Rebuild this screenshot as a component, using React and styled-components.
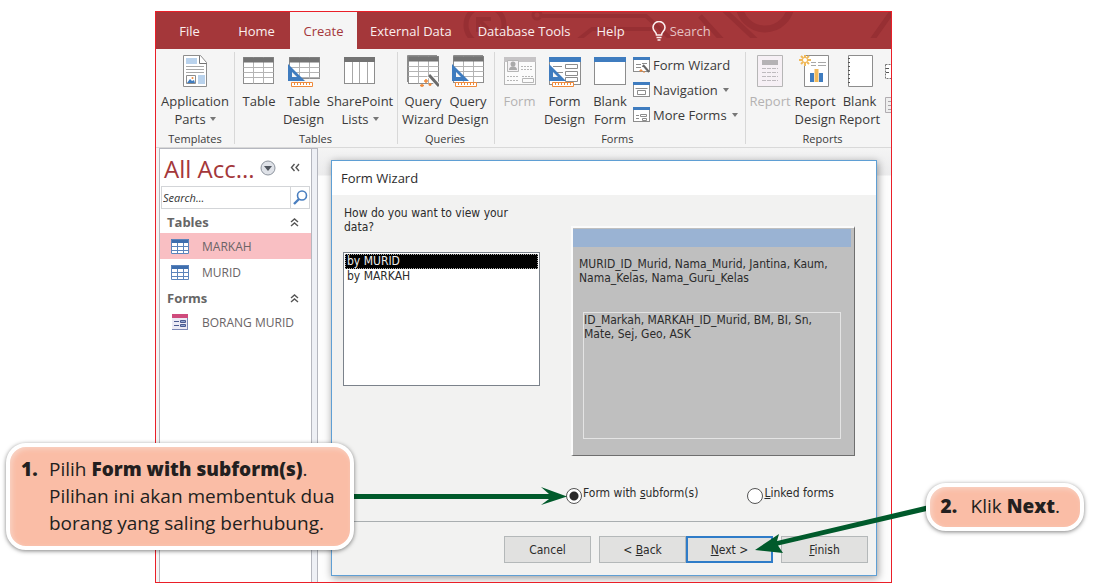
import React from "react";
import styled, { createGlobalStyle, css } from "styled-components";

const UI = '"Open Sans", "Noto Sans", sans-serif';
const DIALOG = '"DejaVu Sans Condensed", "DejaVu Sans", sans-serif';
const BLUE = "#3f7cbf";
const GREEN = "#005a2b";

const GlobalStyle = createGlobalStyle`
  *, *::before, *::after { box-sizing: border-box; }
  body { margin: 0; background: #fff; font-family: ${UI}; color: #3b3a3a; }
  button, input, select { font: inherit; color: inherit; }
  svg { display: block; flex: none; }
`;

const Figure = styled.main`
  position: relative;
  padding: 11px 209px 3px 155px;
`;

const AppWindow = styled.section`
  border: 1px solid #ea1f28;
  background: #f4f4f4;
  overflow: hidden;
`;

/* ---------- tab strip ---------- */

const TabStrip = styled.nav`
  position: relative;
  display: flex;
  height: 37px;
  background: #a4373a;
  overflow: hidden;
`;

const Circuit = styled.svg`
  position: absolute;
  top: 0;
  left: 300px;
`;

const Tab = styled.button`
  position: relative;
  flex: none;
  min-width: ${(p) => (p.$wide ? "67px" : "0")};
  padding: 0 13px;
  border: 0;
  background: ${(p) => (p.$active ? "#f5f5f5" : "transparent")};
  color: ${(p) => (p.$active ? "#a4373a" : "#fbeeee")};
  font-size: 13px;
  white-space: nowrap;
`;

const TellMe = styled.label`
  position: relative;
  display: flex;
  align-items: center;
  gap: 4px;
  padding-left: 14px;
  color: #fbeeee;
`;

const TellMeInput = styled.input`
  width: 90px;
  padding: 0;
  border: 0;
  outline: 0;
  background: transparent;
  font-size: 13px;
  &::placeholder { color: #e6c3c4; opacity: 1; }
`;

/* ---------- ribbon ---------- */

const Ribbon = styled.div`
  display: flex;
  border-bottom: 1px solid #d9d9d9;
  background: #f5f5f5;
  overflow: hidden;
`;

const Group = styled.section`
  flex: none;
  display: flex;
  flex-direction: column;
  padding: 0 ${(p) => p.$right || 0}px 1px ${(p) => p.$left || 0}px;
`;

const GroupBody = styled.div`
  display: flex;
  height: 79px;
`;

const GroupName = styled.h2`
  margin: 4px 0 0;
  font-size: 11px;
  font-weight: 400;
  line-height: 14px;
  text-align: center;
`;

const Separator = styled.div`
  flex: none;
  width: 1px;
  margin: 3px 0;
  background: #d8d8d8;
`;

const BigButton = styled.button`
  flex: none;
  display: flex;
  flex-direction: column;
  align-items: center;
  gap: 5px;
  width: ${(p) => p.$width}px;
  padding: 6px 0 0;
  border: 0;
  background: transparent;
  font-size: 13px;
  line-height: 18px;
  white-space: nowrap;
  color: ${(p) => (p.disabled ? "#b4b2b2" : "inherit")};
`;

const LabelLine = styled.span`
  display: flex;
  align-items: center;
  justify-content: center;
  gap: 4px;
`;

const SmallList = styled.div`
  display: flex;
  flex-direction: column;
  padding-top: 3px;
`;

const SmallButton = styled.button`
  display: flex;
  align-items: center;
  gap: 3px;
  height: 25px;
  padding: 0;
  border: 0;
  background: transparent;
  font-size: 13px;
  white-space: nowrap;
`;

const SmallText = styled.span`
  margin-right: 2px;
`;

/* ---------- navigation pane ---------- */

const Workspace = styled.div`
  display: flex;
  padding-left: 3px;
`;

const NavPane = styled.aside`
  flex: none;
  display: flex;
  flex-direction: column;
  width: 153px;
  border: 1px solid #b5b7bf;
  border-bottom: 0;
  background: #fff;
`;

const Shutter = styled.div`
  flex: none;
  width: 6px;
  border: 1px solid #b5b7bf;
  border-width: 1px 1px 0 0;
  background: #eef0f5;
`;

const NavHeader = styled.header`
  display: flex;
  align-items: center;
  height: 37px;
  padding: 0 11px 0 4px;
`;

const NavTitle = styled.h1`
  flex: 1;
  margin: 0;
  padding-top: 2px;
  color: #a4373a;
  font-size: 24px;
  line-height: 30px;
  font-weight: 400;
  white-space: nowrap;
`;

const IconButton = styled.button`
  display: flex;
  align-items: center;
  justify-content: center;
  padding: 0;
  border: 0;
  background: transparent;
  margin-left: ${(p) => p.$gap || 0}px;
`;

const SearchBox = styled.div`
  display: flex;
  height: 23px;
  margin: 0 1px;
  border: 1px solid #d3d5d8;
`;

const SearchInput = styled.input`
  flex: 1;
  min-width: 0;
  padding: 0 1px;
  border: 0;
  outline: 0;
  font-size: 11px;
  font-style: italic;
  &::placeholder { color: #333; opacity: 1; }
`;

const SearchButton = styled.button`
  display: flex;
  align-items: center;
  justify-content: center;
  width: 19px;
  padding: 0;
  border: 0;
  border-left: 1px solid #d3d5d8;
  background: #fff;
`;

const NavGroup = styled.button`
  display: flex;
  align-items: center;
  justify-content: space-between;
  height: 24px;
  padding: 2px 12px 0 7px;
  border: 0;
  background: transparent;
  color: #666;
  font-size: 13px;
  font-weight: 700;
`;

const NavItem = styled.a`
  display: flex;
  align-items: center;
  gap: 13px;
  height: 26px;
  padding-left: 11px;
  background: ${(p) => (p.$active ? "#f9bfc3" : "transparent")};
  color: #6a6466;
  font-size: 12px;
  text-decoration: none;
  white-space: nowrap;
`;

/* ---------- dialog ---------- */

const Canvas = styled.div`
  flex: 1;
  min-width: 0;
  padding: 12px 14px 6px 13px;
  background: linear-gradient(#f4f4f4, #ececed 27px, #fdfdfd 28px);
`;

const Dialog = styled.form`
  border: 1px solid #5f9fd4;
  background: #f2f2f1;
  box-shadow: 1px 2px 8px rgba(0, 0, 0, 0.4);
  font-family: ${DIALOG};
  font-size: 12px;
  line-height: 14px;
  color: #2b2b2b;
`;

const DialogTitle = styled.h2`
  margin: 0;
  padding: 0 9px;
  background: #fff;
  font-family: ${UI};
  font-size: 13px;
  font-weight: 400;
  line-height: 34px;
`;

const DialogBody = styled.div`
  display: flex;
  gap: 31px;
  padding: 11px 21px 0 11px;
`;

const Choice = styled.div`
  flex: none;
  width: 197px;
`;

const Question = styled.label`
  display: block;
  margin-bottom: 18px;
  padding-left: 1px;
`;

const ListBox = styled.select`
  display: block;
  width: 100%;
  height: 134px;
  padding: 1px;
  border: 1px solid #7b828b;
  border-radius: 0;
  outline: 0;
  background: #fff;
  overflow: hidden;
`;

const ListOption = styled.option`
  min-height: 15px;
  padding: 0 2px;
  line-height: 15px;
  color: #2b2b2b;
  &:checked {
    background: linear-gradient(#000, #000);
    color: #eee;
    outline: 1px dotted #aaa;
    outline-offset: -1px;
  }
`;

const Preview = styled.div`
  flex: 1;
  min-width: 0;
  height: 230px;
  margin-top: 20px;
  border-style: solid;
  border-width: 2px 1px 1px 2px;
  border-color: #fbfbfb #6f6f6f #6f6f6f #fbfbfb;
  background: #bfbfbf;
  display: flex;
  flex-direction: column;
`;

const PreviewBar = styled.div`
  height: 18px;
  margin: 1px 3px 0 0;
  background: #9ab3d3;
`;

const PreviewText = styled.p`
  margin: 10px 6px 0;
  min-height: 28px;
`;

const SubForm = styled.p`
  flex: 1;
  margin: 27px 13px 16px 10px;
  border: 1px solid #e4e4e4;
`;

const RadioRow = styled.div`
  display: flex;
  margin-top: 30px;
  padding-left: 234px;
`;

const RadioOption = styled.label`
  flex: none;
  display: flex;
  gap: 1px;
  margin-right: 49px;
  white-space: nowrap;
`;

const Radio = styled.input`
  appearance: none;
  flex: none;
  width: 16px;
  height: 16px;
  margin: 2px 0 0;
  border: 1px solid #555;
  border-radius: 50%;
  background: #fff;
  &:checked { background: radial-gradient(circle, #2b2b2b 4px, #fff 5px); }
`;

const Actions = styled.footer`
  display: flex;
  justify-content: flex-end;
  gap: 8px;
  margin-top: 17px;
  padding: 14px 8px 12px;
  border-top: 1px solid #a9aeb0;
`;

const Pair = styled.div`
  display: flex;
`;

const Push = styled.button`
  width: 87px;
  height: 27px;
  padding: 0;
  border: ${(p) => (p.$primary ? "2px solid #2f7cc8" : "1px solid #b4b8b9")};
  background: #e1e1e0;
  white-space: nowrap;
`;

/* ---------- annotations ---------- */

const calloutSide = {
  left: css`top: 443px; left: 6px; padding: 9px 16px 9px 11px;`,
  right: css`top: 483px; right: 17px; padding: 6px 20px 7px 11px;`,
};

const Callout = styled.aside`
  position: absolute;
  display: flex;
  border: 4px solid #fff;
  border-radius: 20px;
  background: #fabda6;
  box-shadow: 0 1px 4px rgba(0, 0, 0, 0.5), inset 2px 2px 5px #f8d3c5;
  color: #231f20;
  font-size: 19px;
  line-height: 27px;
  white-space: nowrap;
  ${(p) => calloutSide[p.$side]}
`;

const Strong = styled.b`
  font-weight: 800;
`;

const StepNumber = styled(Strong)`
  width: ${(p) => p.$width}px;
`;

const StepText = styled.p`
  margin: 0;
`;

const ArrowRight = styled.svg`
  position: absolute;
  top: 484px;
  left: 350px;
`;

const ArrowLeft = styled.svg`
  position: absolute;
  top: 500px;
  right: 170px;
`;

/* ---------- icons ---------- */

const Caret = () => (
  <svg width="6" height="4" viewBox="0 0 6 4"><path d="M0 0h6L3 4z" fill="#777" /></svg>
);

const Ruler = () => (
  <g>
    <path d="M0 9v17h17z" fill={BLUE} />
    <path d="M4 17v5h5z" fill="#f5f5f5" />
    <path d="M3.500 27.500h21v4h-21z" fill="#fff" stroke="#ee8a3c" />
    <path d="M6.500 28v2M9.500 28v2M12.500 28v2M15.500 28v2M18.500 28v2M21.500 28v2" stroke="#ee8a3c" />
  </g>
);

const Wand = () => (
  <g>
    <path d="M22 20l10 11" stroke="#fff" strokeWidth="5" />
    <path d="M22 20l10 11" stroke="#6b6b6b" strokeWidth="3" />
    <path d="M19 24v4M17 26h4M15 29v3M13 30.500h4M23 28v3M21.500 29.500h3" stroke="#ee8a3c" strokeWidth="1.500" />
  </g>
);

const Grid = ({ x = 0.5, y = 2.5, h = 26, head = "#737373" }) => (
  <g>
    <rect x={x} y={y} width="30" height={h} fill="#fff" stroke="#8d8d8d" />
    <path
      d={`M${x} ${y + 10}h30M${x} ${y + 15}h30M${x} ${y + 20}h30M${x + 10} ${y}v${h}M${x + 20} ${y}v${h}`}
      stroke="#b4b4b4"
      fill="none"
    />
    <rect x={x} y={y} width="30" height="5" fill={head} />
  </g>
);

const FormSheet = ({ head = BLUE, children }) => (
  <g>
    <rect x="0.5" y="2.500" width="31" height="27" fill="#fff" stroke="#8d8d8d" />
    <rect x="0" y="2" width="32" height="5" fill={head} />
    {children}
  </g>
);

const bigIcons = {
  parts: (
    <g fill="none">
      <path d="M4.500.5h17l6 7v24h-23z" fill="#fff" stroke="#8d8d8d" />
      <path d="M20.500 1v7.500h7" stroke="#737373" />
      <path d="M7 3h11v6H7zM19 20h7v9h-7z" fill="#b9d2ec" />
      <path d="M7 11.500h18M7 14.500h18M7 17.500h18" stroke="#a8a8a8" />
      <path d="M7.500 20.500h9v8h-9z" stroke="#8d8d8d" />
      <path d="M8 28l3-4 2 2 2-1 1 3z" fill={BLUE} />
      <circle cx="13.500" cy="23" r="1" fill="#ee8a3c" />
    </g>
  ),
  table: <Grid />,
  tableDesign: <g><Grid x={1.5} h={21} /><Ruler /></g>,
  lists: (
    <g>
      <rect x="0.5" y="2.500" width="30" height="26" fill="#fff" stroke="#8d8d8d" />
      <path d="M8.500 5v23M15.500 5v23M23.500 5v23" stroke="#a8a8a8" />
      <rect x="0" y="2" width="31" height="5" fill="#737373" />
    </g>
  ),
  queryWizard: <g><path d="M.5 27V.5H30" fill="none" stroke="#8d8d8d" /><Grid x={1.5} y={1.5} h={27} /><Wand /></g>,
  queryDesign: <g><path d="M1.500 27V.5H31" fill="none" stroke="#8d8d8d" /><Grid x={1.5} y={1.5} h={26} /><Ruler /></g>,
  form: (
    <g opacity="0.6">
      <FormSheet head="#a8a4a8">
        <path d="M3.500 5.500h11v11h-11z" fill="#f3eff3" stroke="#8d8d8d" />
        <circle cx="9" cy="9" r="2.500" fill="#777" />
        <path d="M5 15c0-5 8-5 8 0z" fill="#777" />
        <path d="M17 11.500h12M17 14.500h12M3 21.500h12M3 25.500h12M18 21.500h11" stroke="#8d8d8d" strokeDasharray="2 1" />
        <path d="M18.500 23.500h11v4h-11z" fill="none" stroke="#8d8d8d" />
      </FormSheet>
    </g>
  ),
  formDesign: (
    <g>
      <FormSheet>
        <path d="M16.500 9.500h12v4h-12zM16.500 16.500h12v4h-12zM16.500 22.500h12v4h-12zM4 11.500h9M8 17.500h6" fill="none" stroke="#8d8d8d" />
      </FormSheet>
      <Ruler />
    </g>
  ),
  blankForm: <FormSheet />,
  report: (
    <g opacity="0.6">
      <path d="M3.500.5h25v31h-25z" fill="#f8eef5" stroke="#8d8d8d" />
      <path d="M8 5h16v5H8z" fill="#8b878b" />
      <path d="M8 13.500h16M8 17.500h16M8 21.500h16M8 25.500h16" stroke="#9a949a" strokeDasharray="4 1" />
    </g>
  ),
  reportDesign: (
    <g>
      <path d="M5.500.5h24v31h-24z" fill="#fff" stroke="#8d8d8d" />
      <path d="M12 7.500h5M19 7.500h8M12 10.500h5M19 10.500h8" stroke="#a8a8a8" />
      <path d="M11 18h4v9h-4zM20 18h4v9h-4z" fill={BLUE} />
      <path d="M15.500 14h4v13h-4z" fill="#f0b95a" />
      <path d="M0 5h12M6-1v12M2 1l8 8M10 1L2 9" stroke="#f0b95a" strokeWidth="2" />
      <circle cx="6" cy="5" r="2" fill="#fff" />
    </g>
  ),
  blankReport: (
    <g>
      <path d="M4.500.5h24v31h-24z" fill="#fff" stroke="#8d8d8d" />
      <path d="M5 3v28" stroke="#555" strokeWidth="2" strokeDasharray="1 3" />
    </g>
  ),
};

const BigIcon = ({ name }) => (
  <svg width="32" height="32" viewBox="0 0 32 32">{bigIcons[name]}</svg>
);

const smallIcons = {
  wizard: (
    <g>
      <path d="M3 7.500h5M3 10.500h5M9 6.500h5M9 9.500h3" stroke="#8d8d8d" fill="none" />
      <path d="M10 8l6 7" stroke="#666" strokeWidth="2" />
      <path d="M8 12v3M6.500 13.500h3M11 14v2" stroke="#ee8a3c" />
    </g>
  ),
  navigation: <path d="M2.500 6.500h12M4.500 8.500h8v4h-8z" stroke="#8d8d8d" fill="none" />,
  more: <path d="M3 8.500h3M3 11.500h3M7.500 7.500h6v2h-6zM9.500 11.500h4v2h-4z" stroke="#8d8d8d" fill="none" />,
};

const SmallIcon = ({ name }) => (
  <svg width="17" height="16" viewBox="0 0 17 16">
    <rect x="0.5" y="0.500" width="16" height="14" fill="#fff" stroke="#8d8d8d" />
    <rect x="0" y="0" width="17" height="3" fill={BLUE} />
    {smallIcons[name]}
  </svg>
);

const EdgeIcons = () => (
  <svg width="16" height="79" viewBox="0 0 16 79">
    <path d="M3.500 15.500h14v14h-14z" fill="#fff" stroke="#777" strokeDasharray="2 1" />
    <path d="M4 19.500h3M4 23.500h3" stroke="#555" />
    <path d="M3.500 48.500h14v15h-14z" fill="#eee" stroke="#b0acb0" />
    <path d="M6 52.500h8M6 56.500h8M6 60.500h8" stroke="#a8a4a8" />
  </svg>
);

const TableGlyph = () => (
  <svg width="18" height="15" viewBox="0 0 18 15">
    <rect width="18" height="15" fill="#fff" />
    <rect width="18" height="4" fill="#3d6eae" />
    <path d="M.5.5h17v14H.5zM0 7.500h18M0 11.500h18M6.500 4v11M12.500 4v11" fill="none" stroke="#5b84bb" />
  </svg>
);

const FormGlyph = () => (
  <svg width="18" height="16" viewBox="0 0 18 16">
    <rect x="1" width="16" height="16" fill="#eceaf4" />
    <rect x="1" width="16" height="4" fill="#cf4b7c" />
    <path d="M3 7.500h5M3 11.500h5" stroke="#4b5a90" />
    <path d="M9.500 6.500h5v2h-5zM9.500 10.500h5v2h-5z" fill="#8fa4d0" stroke="#4b5a90" />
    <path d="M1 15.500h16M16.500 4v12" stroke="#7d88b5" />
  </svg>
);

const DoubleUp = () => (
  <svg width="9" height="9" viewBox="0 0 9 9">
    <path d="M1 4l3.500-3L8 4M1 8l3.500-3L8 8" fill="none" stroke="#555" strokeWidth="1.400" />
  </svg>
);

const BigAction = ({ icon, width, lines, caret, disabled }) => (
  <BigButton type="button" $width={width} disabled={disabled}>
    <BigIcon name={icon} />
    <span>
      {lines.map((line, i) => (
        <LabelLine key={line}>
          {line}
          {caret && i === lines.length - 1 && <Caret />}
        </LabelLine>
      ))}
    </span>
  </BigButton>
);

const SmallAction = ({ icon, text, caret }) => (
  <SmallButton type="button">
    <SmallIcon name={icon} />
    <SmallText>{text}</SmallText>
    {caret && <Caret />}
  </SmallButton>
);

export default function App() {
  return (
    <Figure>
      <GlobalStyle />
      <AppWindow>
        <TabStrip>
          <Circuit width="436" height="26" viewBox="0 0 436 26" fill="none" stroke="#972f33">
            <circle cx="29" cy="13" r="19" strokeWidth="5" />
            <path d="M22 7l14 14M22 20V7h13" strokeWidth="4" />
            <circle cx="81" cy="3" r="4" strokeWidth="3" />
            <path d="M86 4h104l24 22" strokeWidth="4" />
            <path d="M122 28l14-11h62" strokeWidth="4" />
            <path d="M266-4l34 32M244 4l22 24" strokeWidth="5" />
            <circle cx="309" cy="-9" r="26" strokeWidth="7" />
            <path d="M416 28l24-34" strokeWidth="5" />
          </Circuit>
          <Tab type="button" $wide>File</Tab>
          <Tab type="button" $wide>Home</Tab>
          <Tab type="button" $wide $active>Create</Tab>
          <Tab type="button">External Data</Tab>
          <Tab type="button">Database Tools</Tab>
          <Tab type="button">Help</Tab>
          <TellMe>
            <svg width="14" height="20" viewBox="0 0 14 20" fill="none" stroke="currentColor" strokeWidth="1.600">
              <path d="M4.500 14c0-3-3.500-4-3.500-7.500a6 6 0 0 1 12 0C13 10 9.500 11 9.500 14zM4.500 16.500h5M5.500 19h3" />
            </svg>
            <TellMeInput type="text" placeholder="Search" aria-label="Search commands" />
          </TellMe>
        </TabStrip>

        <Ribbon>
          <Group $left={1} $right={1}>
            <GroupBody>
              <BigAction icon="parts" width={76} lines={["Application", "Parts"]} caret />
            </GroupBody>
            <GroupName>Templates</GroupName>
          </Group>
          <Separator />
          <Group $left={1} $right={2}>
            <GroupBody>
              <BigAction icon="table" width={46} lines={["Table"]} />
              <BigAction icon="tableDesign" width={43} lines={["Table", "Design"]} />
              <BigAction icon="lists" width={70} lines={["SharePoint", "Lists"]} caret />
            </GroupBody>
            <GroupName>Tables</GroupName>
          </Group>
          <Separator />
          <Group $left={2} $right={4}>
            <GroupBody>
              <BigAction icon="queryWizard" width={46} lines={["Query", "Wizard"]} />
              <BigAction icon="queryDesign" width={44} lines={["Query", "Design"]} />
            </GroupBody>
            <GroupName>Queries</GroupName>
          </Group>
          <Separator />
          <Group $left={2} $right={7}>
            <GroupBody>
              <BigAction icon="form" width={45} lines={["Form"]} disabled />
              <BigAction icon="formDesign" width={45} lines={["Form", "Design"]} />
              <BigAction icon="blankForm" width={46} lines={["Blank", "Form"]} />
              <SmallList>
                <SmallAction icon="wizard" text="Form Wizard" />
                <SmallAction icon="navigation" text="Navigation" caret />
                <SmallAction icon="more" text="More Forms" caret />
              </SmallList>
            </GroupBody>
            <GroupName>Forms</GroupName>
          </Group>
          <Separator />
          <Group $left={2} $right={11}>
            <GroupBody>
              <BigAction icon="report" width={45} lines={["Report"]} disabled />
              <BigAction icon="reportDesign" width={45} lines={["Report", "Design"]} />
              <BigAction icon="blankReport" width={44} lines={["Blank", "Report"]} />
              <EdgeIcons />
            </GroupBody>
            <GroupName>Reports</GroupName>
          </Group>
        </Ribbon>

        <Workspace>
          <NavPane>
            <NavHeader>
              <NavTitle>All Acc...</NavTitle>
              <IconButton type="button" aria-label="Choose objects">
                <svg width="16" height="16" viewBox="0 0 16 16">
                  <circle cx="8" cy="8" r="7" fill="#dfe2e8" stroke="#8d949e" />
                  <path d="M4 6h8l-4 5z" fill="#50565f" />
                </svg>
              </IconButton>
              <IconButton type="button" aria-label="Collapse pane" $gap={14}>
                <svg width="10" height="9" viewBox="0 0 10 9">
                  <path d="M4.500 1L1.500 4.500l3 3.500M9 1L6 4.500 9 8" fill="none" stroke="#555" strokeWidth="1.400" />
                </svg>
              </IconButton>
            </NavHeader>
            <SearchBox>
              <SearchInput type="text" placeholder="Search..." aria-label="Search objects" />
              <SearchButton type="button" aria-label="Run search">
                <svg width="15" height="15" viewBox="0 0 15 15" fill="none" stroke="#4a7fc0">
                  <circle cx="9" cy="5.500" r="4.500" strokeWidth="1.600" />
                  <path d="M6 9l-5 5" strokeWidth="2.400" />
                </svg>
              </SearchButton>
            </SearchBox>
            <NavGroup type="button">Tables<DoubleUp /></NavGroup>
            <NavItem href="#markah" $active><TableGlyph />MARKAH</NavItem>
            <NavItem href="#murid"><TableGlyph />MURID</NavItem>
            <NavGroup type="button">Forms<DoubleUp /></NavGroup>
            <NavItem href="#borang"><FormGlyph />BORANG MURID</NavItem>
          </NavPane>
          <Shutter />

          <Canvas>
            <Dialog onSubmit={(e) => e.preventDefault()}>
              <DialogTitle>Form Wizard</DialogTitle>
              <DialogBody>
                <Choice>
                  <Question htmlFor="view-by">How do you want to view your data?</Question>
                  <ListBox id="view-by" size={8} defaultValue="murid">
                    <ListOption value="murid">by MURID</ListOption>
                    <ListOption value="markah">by MARKAH</ListOption>
                  </ListBox>
                </Choice>
                <Preview>
                  <PreviewBar />
                  <PreviewText>MURID_ID_Murid, Nama_Murid, Jantina, Kaum, Nama_Kelas, Nama_Guru_Kelas</PreviewText>
                  <SubForm>ID_Markah, MARKAH_ID_Murid, BM, BI, Sn, Mate, Sej, Geo, ASK</SubForm>
                </Preview>
              </DialogBody>
              <RadioRow>
                <RadioOption>
                  <Radio type="radio" name="layout" defaultChecked />
                  <span>Form with <u>s</u>ubform(s)</span>
                </RadioOption>
                <RadioOption>
                  <Radio type="radio" name="layout" />
                  <span><u>L</u>inked forms</span>
                </RadioOption>
              </RadioRow>
              <Actions>
                <Push type="button">Cancel</Push>
                <Pair>
                  <Push type="button">&lt; <u>B</u>ack</Push>
                  <Push type="button" $primary><u>N</u>ext &gt;</Push>
                </Pair>
                <Push type="submit"><u>F</u>inish</Push>
              </Actions>
            </Dialog>
          </Canvas>
        </Workspace>
      </AppWindow>

      <ArrowRight width="218" height="24" viewBox="0 0 218 24" fill={GREEN}>
        <path d="M0 10h199L191 3l26 9.500L191 21l8-6H0z" />
      </ArrowRight>
      <ArrowLeft width="176" height="58" viewBox="0 0 176 58" fill={GREEN}>
        <path d="M172 5.500l2 5L23 45.500l5 7.500L0 50l24-16-2 7z" />
      </ArrowLeft>

      <Callout $side="left">
        <StepNumber $width={28}>1.</StepNumber>
        <StepText>
          Pilih <Strong>Form with subform(s)</Strong>.<br />
          Pilihan ini akan membentuk dua<br />
          borang yang saling berhubung.
        </StepText>
      </Callout>
      <Callout $side="right">
        <StepNumber $width={30}>2.</StepNumber>
        <StepText>Klik <Strong>Next</Strong>.</StepText>
      </Callout>
    </Figure>
  );
}
